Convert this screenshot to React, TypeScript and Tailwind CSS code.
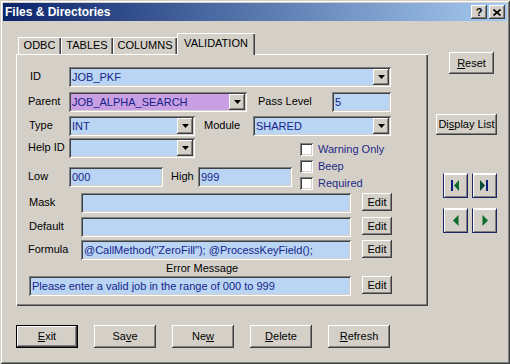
const sunken =
  "shadow-[inset_1px_1px_#808080,inset_-1px_-1px_#fff,inset_2px_2px_#404040,inset_-2px_-2px_#d4d0c8]";
const raised =
  "shadow-[inset_-1px_-1px_#404040,inset_1px_1px_#fff,inset_-2px_-2px_#808080]";

function Arrow() {
  return (
    <span className={`w-[16px] h-full flex items-center justify-center bg-[#d4d0c8] ${raised}`}>
      <svg width="7" height="4" viewBox="0 0 7 4">
        <path d="M0 0h7L3.5 4z" fill="#000" />
      </svg>
    </span>
  );
}

function Combo({ className, text = "", bg = "bg-[#b9d5f3]" }: { className: string; text?: string; bg?: string }) {
  return (
    <div className={`${className} h-[20px] flex items-center p-[2px] ${bg} ${sunken}`}>
      <span className="flex-1 pl-[1px] text-[#16248a] truncate">{text}</span>
      <Arrow />
    </div>
  );
}

function Field({ className, text = "" }: { className: string; text?: string }) {
  return (
    <div className={`${className} h-[20px] flex items-center px-[3px] bg-[#b9d5f3] text-[#16248a] whitespace-nowrap overflow-hidden ${sunken}`}>
      {text}
    </div>
  );
}

function Label({ className, children }: { className: string; children: React.ReactNode }) {
  return <span className={`${className} mt-[3px] shrink-0 whitespace-nowrap`}>{children}</span>;
}

function EditBtn() {
  return (
    <button className={`ml-[11px] w-[30px] h-[18px] flex items-center justify-center bg-[#d4d0c8] ${raised}`}>
      Edit
    </button>
  );
}

function Check({ label }: { label: string }) {
  return (
    <div className="h-[17px] flex items-center gap-[5px]">
      <span className={`w-[13px] h-[13px] bg-white ${sunken}`} />
      <span className="text-[#1c2a86]">{label}</span>
    </div>
  );
}

function NavBtn({ children }: { children: React.ReactNode }) {
  return (
    <button className="w-[25px] h-[25px] flex items-center justify-center bg-[#d4d0c8] border border-t-white border-l-[#1b2466] border-r-[#1b2466] border-b-[#1b2466] shadow-[inset_1px_1px_#fff,inset_-1px_-1px_#808080]">
      {children}
    </button>
  );
}

function BottomBtn({ children, def = false }: { children: React.ReactNode; def?: boolean }) {
  return (
    <button
      className={`w-[62px] h-[23px] flex items-center justify-center bg-[#d4d0c8] ${
        def
          ? "shadow-[inset_1px_1px_#000,inset_-1px_-1px_#000,inset_-2px_-2px_#404040,inset_2px_2px_#fff,inset_-3px_-3px_#808080]"
          : raised
      }`}
    >
      {children}
    </button>
  );
}

export default function App() {
  return (
    <div className="w-[510px] h-[364px] p-[3px] bg-[#d4d0c8] text-[11px] leading-[13px] text-black [font-family:'Liberation_Sans',Arial,sans-serif] shadow-[inset_1px_1px_#d4d0c8,inset_-1px_-1px_#404040,inset_2px_2px_#fff,inset_-2px_-2px_#808080]">
      {/* title bar */}
      <div className="h-[18px] flex items-center pl-[2px] pr-[2px] bg-[linear-gradient(to_right,#0a246a,#a6caf0)]">
        <span className="flex-1 text-white font-bold text-[12px]">Files &amp; Directories</span>
        <div className="flex gap-[2px]">
          <span className={`w-[16px] h-[14px] flex items-center justify-center bg-[#d4d0c8] font-bold text-[11px] ${raised}`}>?</span>
          <span className={`w-[16px] h-[14px] flex items-center justify-center bg-[#d4d0c8] ${raised}`}>
            <svg width="8" height="7" viewBox="0 0 8 7">
              <path d="M0.5 0.5l7 6M7.5 0.5l-7 6" stroke="#000" strokeWidth="1.6" />
            </svg>
          </span>
        </div>
      </div>

      <div className="flex">
        {/* tabs + panel */}
        <div className="pl-[13px] pt-[12px]">
          <div className="flex items-end h-[21px] pl-[2px]">
            <div className="w-[43px] h-[17px] flex items-center justify-center shadow-[inset_1px_1px_#fff,inset_-1px_0_#404040,inset_-2px_0_#808080]">ODBC</div>
            <div className="w-[52px] h-[17px] flex items-center justify-center shadow-[inset_1px_1px_#fff,inset_-1px_0_#404040,inset_-2px_0_#808080]">TABLES</div>
            <div className="w-[64px] h-[17px] flex items-center justify-center shadow-[inset_1px_1px_#fff,inset_-1px_0_#404040,inset_-2px_0_#808080]">COLUMNS</div>
            <div className="relative z-10 w-[78px] h-[22px] -mb-[1px] pb-[1px] flex items-center justify-center bg-[#d4d0c8] shadow-[inset_1px_1px_#fff,inset_-1px_0_#404040,inset_-2px_0_#808080]">VALIDATION</div>
          </div>

          <div className="w-[412px] h-[252px] pl-[12px] pt-[13px] shadow-[inset_1px_1px_#fff,inset_-1px_-1px_#404040,inset_-2px_-2px_#808080]">
            <div className="flex">
              <Label className="w-[41px] pl-[2px]">ID</Label>
              <Combo className="w-[322px]" text="JOB_PKF" />
            </div>
            <div className="flex mt-[5px]">
              <Label className="w-[41px]">Parent</Label>
              <Combo className="w-[178px]" text="JOB_ALPHA_SEARCH" bg="bg-[#c89fe2]" />
              <Label className="w-[85px] pl-[11px]">Pass Level</Label>
              <Field className="w-[59px]" text="5" />
            </div>
            <div className="flex mt-[4px]">
              <Label className="w-[41px] pl-[1px]">Type</Label>
              <Combo className="w-[126px]" text="INT" />
              <Label className="w-[58px] pl-[9px]">Module</Label>
              <Combo className="w-[138px]" text="SHARED" />
            </div>

            <div className="flex mt-[2px]">
              <div className="w-[264px]">
                <div className="flex">
                  <Label className="w-[41px]">Help ID</Label>
                  <Combo className="w-[126px]" />
                </div>
                <div className="flex mt-[9px]">
                  <Label className="w-[41px]">Low</Label>
                  <Field className="w-[94px]" text="000" />
                  <Label className="w-[35px] pl-[8px]">High</Label>
                  <Field className="w-[94px]" text="999" />
                </div>
              </div>
              <div className="ml-[8px] pt-[3px]">
                <Check label="Warning Only" />
                <Check label="Beep" />
                <Check label="Required" />
              </div>
            </div>

            <div className="flex mt-[1px]">
              <Label className="w-[53px] pl-[1px]">Mask</Label>
              <Field className="w-[270px]" />
              <EditBtn />
            </div>
            <div className="flex mt-[4px]">
              <Label className="w-[53px] pl-[1px]">Default</Label>
              <Field className="w-[270px]" />
              <EditBtn />
            </div>
            <div className="flex mt-[3px]">
              <Label className="w-[53px]">Formula</Label>
              <Field className="w-[270px]" text={'@CallMethod("ZeroFill"); @ProcessKeyField();'} />
              <EditBtn />
            </div>
            <div className="mt-[2px] pl-[138px]">Error Message</div>
            <div className="flex mt-[1px] pl-[1px]">
              <Field className="w-[322px]" text="Please enter a valid job in the range of 000 to 999" />
              <EditBtn />
            </div>
          </div>
        </div>

        {/* right column */}
        <div className="ml-[8px] pt-[31px]">
          <button className={`ml-[13px] w-[45px] h-[22px] flex items-center justify-center bg-[#d4d0c8] ${raised}`}>
            <span><u>R</u>eset</span>
          </button>
          <button className={`mt-[40px] w-[61px] h-[21px] flex items-center justify-center bg-[#d4d0c8] ${raised}`}>
            <span>Di<u>s</u>play List</span>
          </button>
          <div className="ml-[7px] mt-[38px] flex flex-col gap-[10px]">
            <div className="flex gap-[4px]">
              <NavBtn>
                <svg width="9" height="11" viewBox="0 0 9 11">
                  <rect x="0" y="0" width="2" height="11" fill="#0a1f7a" />
                  <path d="M8 0v11L3 5.5z" fill="#0b6b2a" />
                </svg>
              </NavBtn>
              <NavBtn>
                <svg width="9" height="11" viewBox="0 0 9 11">
                  <path d="M0 0v11l5-5.5z" fill="#0b4a3a" />
                  <rect x="6" y="0" width="2" height="11" fill="#0a1f7a" />
                </svg>
              </NavBtn>
            </div>
            <div className="flex gap-[4px]">
              <NavBtn>
                <svg width="6" height="11" viewBox="0 0 6 11">
                  <path d="M5.5 0v11L0 5.5z" fill="#0b6b2a" />
                </svg>
              </NavBtn>
              <NavBtn>
                <svg width="6" height="11" viewBox="0 0 6 11">
                  <path d="M0.5 0v11L6 5.5z" fill="#0b6b2a" />
                </svg>
              </NavBtn>
            </div>
          </div>
        </div>
      </div>

      {/* bottom buttons */}
      <div className="flex gap-[16px] pl-[13px] mt-[19px]">
        <BottomBtn def><span><u>E</u>xit</span></BottomBtn>
        <BottomBtn><span>Sa<u>v</u>e</span></BottomBtn>
        <BottomBtn><span>Ne<u>w</u></span></BottomBtn>
        <BottomBtn><span><u>D</u>elete</span></BottomBtn>
        <BottomBtn><span><u>R</u>efresh</span></BottomBtn>
      </div>
    </div>
  );
}
